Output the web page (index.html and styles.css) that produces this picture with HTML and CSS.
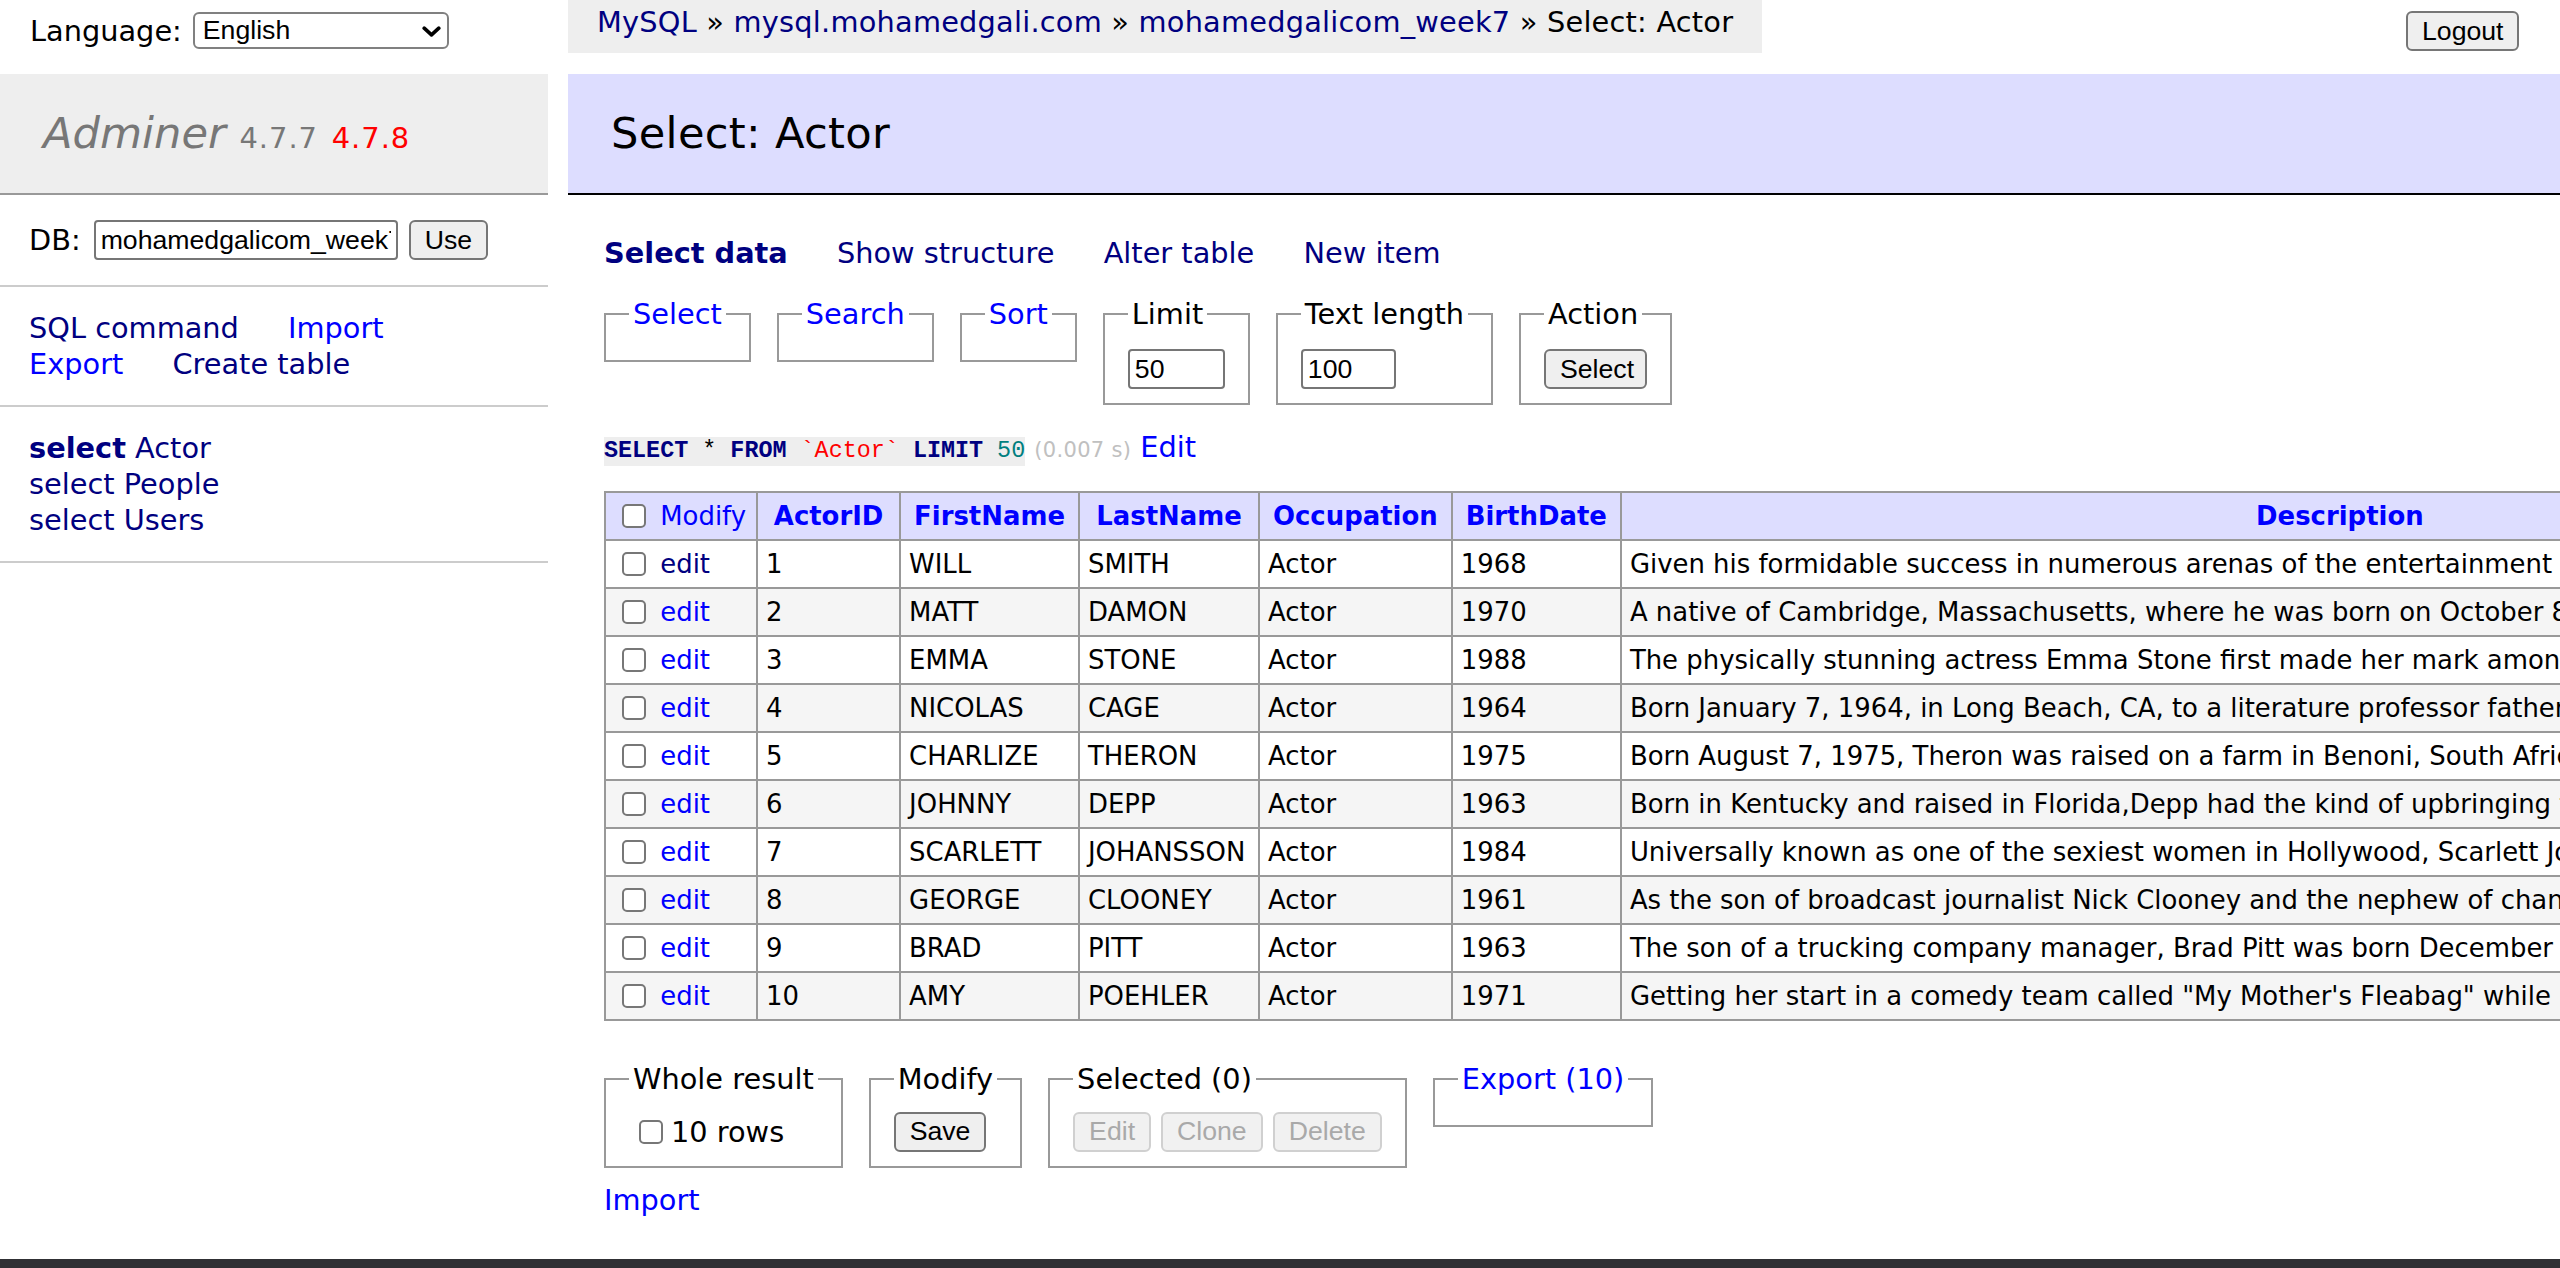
FILE: index.html
```html
<!DOCTYPE html>
<html lang="en">
<head>
<meta charset="utf-8">
<title>Select: Actor - Adminer</title>
<link rel="stylesheet" href="styles.css">
</head>
<body>
<div class="top">
  <form class="lang">
    <span>Language:</span>
    <span class="select-wrap">
      <select class="lang-select"><option>English</option></select>
      <svg class="chev" viewBox="0 0 19 11" aria-hidden="true"><path d="M2.2 2.2 L9.5 8.8 L16.8 2.2" fill="none" stroke="#000" stroke-width="3.6" stroke-linecap="round" stroke-linejoin="round"/></svg>
    </span>
  </form>
  <p class="breadcrumb"><a class="v" href="#">MySQL</a> » <a class="v" href="#">mysql.mohamedgali.com</a> » <a class="v" href="#">mohamedgalicom_week7</a> » Select: Actor</p>
  <form class="logout"><input type="button" class="btn" value="Logout"></form>
</div>

<div class="main">
  <div class="menu">
    <h1><a class="brand" href="#">Adminer</a> <span class="version">4.7.7</span> <a class="newver" href="#">4.7.8</a></h1>
    <form class="msec dbs">
      <span>DB:</span>
      <input class="txt db-input" value="mohamedgalicom_week7">
      <input type="button" class="btn use-btn" value="Use">
    </form>
    <p class="msec links"><a class="v" href="#">SQL command</a> <a href="#">Import</a><br><a href="#">Export</a> <a class="v" href="#">Create table</a></p>
    <ul class="msec tables">
      <li><a class="v active" href="#">select</a> <a class="v" href="#">Actor</a></li>
      <li><a class="v" href="#">select</a> <a class="v" href="#">People</a></li>
      <li><a class="v" href="#">select</a> <a class="v" href="#">Users</a></li>
    </ul>
  </div>

  <div class="content">
    <h2>Select: Actor</h2>
    <p class="links tabs"><a class="v active" href="#">Select data</a> <a class="v" href="#">Show structure</a> <a class="v" href="#">Alter table</a> <a class="v" href="#">New item</a></p>

    <form class="filters">
      <fieldset><legend><a href="#">Select</a></legend></fieldset>
      <fieldset><legend><a href="#">Search</a></legend></fieldset>
      <fieldset><legend><a href="#">Sort</a></legend></fieldset>
      <fieldset><legend>Limit</legend><div class="fs-body"><input class="txt num" value="50"></div></fieldset>
      <fieldset><legend>Text length</legend><div class="fs-body"><input class="txt num2" value="100"></div></fieldset>
      <fieldset><legend>Action</legend><div class="fs-body"><input type="button" class="btn" value="Select"></div></fieldset>
    </form>

    <p class="sql"><code><span class="kw">SELECT</span> * <span class="kw">FROM</span> <span class="id">`Actor`</span> <span class="kw">LIMIT</span> <span class="nm">50</span></code> <span class="time">(0.007 s)</span> <a href="#">Edit</a></p>

    <table class="data">
      <thead>
        <tr>
          <td class="c-mod"><input type="checkbox" class="chk"> <a href="#">Modify</a></td>
          <th class="c-id"><a href="#">ActorID</a></th>
          <th class="c-fn"><a href="#">FirstName</a></th>
          <th class="c-ln"><a href="#">LastName</a></th>
          <th class="c-oc"><a href="#">Occupation</a></th>
          <th class="c-bd"><a href="#">BirthDate</a></th>
          <th class="c-desc"><a href="#">Description</a></th>
        </tr>
      </thead>
      <tbody>
        <tr><td><input type="checkbox" class="chk"> <a class="v" href="#">edit</a></td><td>1</td><td>WILL</td><td>SMITH</td><td>Actor</td><td>1968</td><td>Given his formidable success in numerous arenas of the entertainment world, it's hard to believe<i>…</i></td></tr>
        <tr><td><input type="checkbox" class="chk"> <a href="#">edit</a></td><td>2</td><td>MATT</td><td>DAMON</td><td>Actor</td><td>1970</td><td>A native of Cambridge, Massachusetts, where he was born on October 8, 1970, Matt Damon has beco<i>…</i></td></tr>
        <tr><td><input type="checkbox" class="chk"> <a href="#">edit</a></td><td>3</td><td>EMMA</td><td>STONE</td><td>Actor</td><td>1988</td><td>The physically stunning actress Emma Stone first made her mark among the young hip, cool crowd<i>…</i></td></tr>
        <tr><td><input type="checkbox" class="chk"> <a href="#">edit</a></td><td>4</td><td>NICOLAS</td><td>CAGE</td><td>Actor</td><td>1964</td><td>Born January 7, 1964, in Long Beach, CA, to a literature professor father and a dancer/choreog<i>…</i></td></tr>
        <tr><td><input type="checkbox" class="chk"> <a href="#">edit</a></td><td>5</td><td>CHARLIZE</td><td>THERON</td><td>Actor</td><td>1975</td><td>Born August 7, 1975, Theron was raised on a farm in Benoni, South Africa, as the only child of<i>…</i></td></tr>
        <tr><td><input type="checkbox" class="chk"> <a href="#">edit</a></td><td>6</td><td>JOHNNY</td><td>DEPP</td><td>Actor</td><td>1963</td><td>Born in Kentucky and raised in Florida,Depp had the kind of upbringing that one would hardly<i>…</i></td></tr>
        <tr><td><input type="checkbox" class="chk"> <a href="#">edit</a></td><td>7</td><td>SCARLETT</td><td>JOHANSSON</td><td>Actor</td><td>1984</td><td>Universally known as one of the sexiest women in Hollywood, Scarlett Johansson has also estab<i>…</i></td></tr>
        <tr><td><input type="checkbox" class="chk"> <a href="#">edit</a></td><td>8</td><td>GEORGE</td><td>CLOONEY</td><td>Actor</td><td>1961</td><td>As the son of broadcast journalist Nick Clooney and the nephew of chanteuse Rosemary Clooney<i>…</i></td></tr>
        <tr><td><input type="checkbox" class="chk"> <a href="#">edit</a></td><td>9</td><td>BRAD</td><td>PITT</td><td>Actor</td><td>1963</td><td>The son of a trucking company manager, Brad Pitt was born December 18, 1963 in Shawnee, Okla<i>…</i></td></tr>
        <tr><td><input type="checkbox" class="chk"> <a href="#">edit</a></td><td>10</td><td>AMY</td><td>POEHLER</td><td>Actor</td><td>1971</td><td>Getting her start in a comedy team called "My Mother's Fleabag" while attending Boston Colle<i>…</i></td></tr>
      </tbody>
    </table>

    <form class="footer">
      <fieldset><legend>Whole result</legend><div class="fs-body"><label class="rows"><input type="checkbox" class="chk chk-rows">10 rows</label></div></fieldset>
      <fieldset><legend>Modify</legend><div class="fs-body"><input type="button" class="btn" value="Save"></div></fieldset>
      <fieldset><legend>Selected (0)</legend><div class="fs-body"><input type="button" class="btn" value="Edit" disabled><input type="button" class="btn" value="Clone" disabled><input type="button" class="btn" value="Delete" disabled></div></fieldset>
      <fieldset><legend><a href="#">Export (10)</a></legend></fieldset>
    </form>
    <div class="import"><a href="#">Import</a></div>
  </div>
</div>
<div class="dock"></div>
</body>
</html>
```
FILE: styles.css
```css
html, body {
  margin: 0;
  overflow: hidden;
}
body {
  font: 28.8px/36px "DejaVu Sans", Verdana, sans-serif;
  color: #000;
  background: #fff;
  height: 1268px;
}
a { color: #0000ff; text-decoration: none; }
a.v { color: #000080; }
.active { font-weight: bold; }

/* form controls */
.btn {
  font: 26.67px/1 "Liberation Sans", Arial, Helvetica, sans-serif;
  height: 40px;
  padding: 0 14px;
  margin: 0;
  border: 2px solid #767676;
  border-radius: 6px;
  background: #efefef;
  color: #000;
  box-sizing: border-box;
}
.btn:disabled {
  color: #a9a9a9;
  border-color: #d0d0d0;
  background: #f1f1f1;
}
.txt {
  font: 26.67px/1 "Liberation Sans", Arial, Helvetica, sans-serif;
  height: 40px;
  margin: 0;
  border: 2px solid #767676;
  border-radius: 4px;
  padding: 0 5px;
  box-sizing: border-box;
  background: #fff;
  color: #000;
}
.chk {
  appearance: none;
  -webkit-appearance: none;
  width: 24px;
  height: 24px;
  margin: 6px 6px 6px 8px;
  border: 2px solid #777;
  border-radius: 5px;
  background: #fff;
  box-sizing: border-box;
  vertical-align: top;
}

/* top bar */
.top {
  display: flex;
  align-items: flex-start;
  width: 2560px;
  height: 53px;
}
.lang {
  flex: none;
  width: 568px;
  box-sizing: border-box;
  margin: 0;
  padding: 12px 0 0 30px;
  display: flex;
  align-items: center;
  gap: 11px;
}
.select-wrap {
  position: relative;
  display: block;
  height: 37px;
}
.lang-select {
  appearance: none;
  -webkit-appearance: none;
  display: block;
  width: 256px;
  height: 37px;
  margin: 0;
  border: 2px solid #808080;
  border-radius: 6px;
  background: #fff;
  color: #000;
  font: 26.67px/1 "Liberation Sans", Arial, Helvetica, sans-serif;
  padding: 0 0 0 8px;
}
.chev {
  position: absolute;
  right: 8px;
  top: 14px;
  width: 19px;
  height: 11px;
  pointer-events: none;
}
.breadcrumb {
  flex: none;
  margin: 0;
  height: 53px;
  line-height: 45px;
  padding: 0 29px;
  background: #eee;
  white-space: nowrap;
  letter-spacing: 0.22px;
}
.logout {
  margin: 11px 41px 0 auto;
}
.logout .btn { width: 113px; }

/* main */
.main {
  display: flex;
  align-items: flex-start;
  margin-top: 21px;
}
.menu {
  flex: none;
  width: 548px;
}
.menu h1 {
  margin: 0;
  font-size: 43.2px;
  line-height: 53px;
  height: 53px;
  padding: 33px 43px;
  font-weight: normal;
  color: #777;
  background: #eee;
  border-bottom: 2px solid #999;
  white-space: nowrap;
}
.brand { color: #777; font-style: italic; }
.version, .newver {
  font-size: 28.9px;
  line-height: 1;
  letter-spacing: 1px;
}
.version { color: #777; }
.newver { color: #ff0000; }
.msec {
  margin: 0;
  padding: 23px 29px;
  border-bottom: 2px solid #ccc;
}
.dbs {
  display: flex;
  align-items: center;
  height: 44px;
}
.db-input { width: 304px; margin-left: 13px; }
.use-btn { width: 79px; margin-left: 11px; }
.links a { margin-right: 40px; white-space: nowrap; }
.tables { list-style: none; }

/* content */
.content {
  flex: 1 0 auto;
  padding: 0 40px 0 56px;
}
h2 {
  margin: 0 0 40px -36px;
  font-size: 43.2px;
  line-height: 53px;
  padding: 33px 43px;
  font-weight: normal;
  color: #000;
  background: #ddf;
  border-bottom: 2px solid #000;
  letter-spacing: 0.3px;
}
.tabs { margin: 0; white-space: nowrap; }

fieldset {
  margin: 0;
  padding: 14px 23px;
  border: 2px solid #999;
  min-width: 0;
}
legend { padding: 0 4px; line-height: 36px; }
.filters {
  display: flex;
  align-items: flex-start;
  gap: 26px;
  margin-top: 25px;
}
.filters .fs-body {
  display: flex;
  align-items: flex-end;
  height: 43px;
}
.num { width: 97px; }
.num2 { width: 95px; }
.filters .btn { width: 103px; }

.sql {
  margin: 23px 0 0;
  line-height: 38px;
  white-space: nowrap;
}
code {
  display: inline-block;
  line-height: 29px;
  background: #eee;
  font: 23.4px/29px "Liberation Mono", "Courier New", monospace;
  color: #000;
}
code .kw { font-weight: bold; color: #000080; }
code .id { color: #ff0000; }
code .nm { color: #007f7f; }
.time { color: silver; font-size: 21px; letter-spacing: 0.3px; }

table.data {
  border-collapse: collapse;
  margin-top: 22px;
  font-size: 25.92px;
  line-height: 36px;
  white-space: nowrap;
}
.data td, .data th {
  border: 2px solid #999;
  padding: 5px 8px;
  text-align: left;
}
.data thead td, .data thead th { background: #ddf; }
.data thead th { padding: 5px 13px; text-align: center; }
.data tbody tr:nth-child(even) { background: #f5f5f5; }
.data i { font-style: italic; }
.data td:first-child { padding-right: 10px; }
.c-id { min-width: 115px; }
.c-ln { min-width: 152px; }
.c-desc { min-width: 1410px; }

.footer {
  display: flex;
  align-items: flex-start;
  gap: 26px;
  margin-top: 40px;
  padding-bottom: 14px;
}
.footer .fs-body {
  display: flex;
  align-items: center;
  gap: 10px;
  height: 41px;
}
.rows { display: flex; align-items: center; }
.chk-rows { margin: 0 8px 0 10px; }
.import { margin-top: 0; }

.dock {
  position: fixed;
  left: 0;
  right: 0;
  bottom: 0;
  height: 9px;
  background: #303034;
}
```
